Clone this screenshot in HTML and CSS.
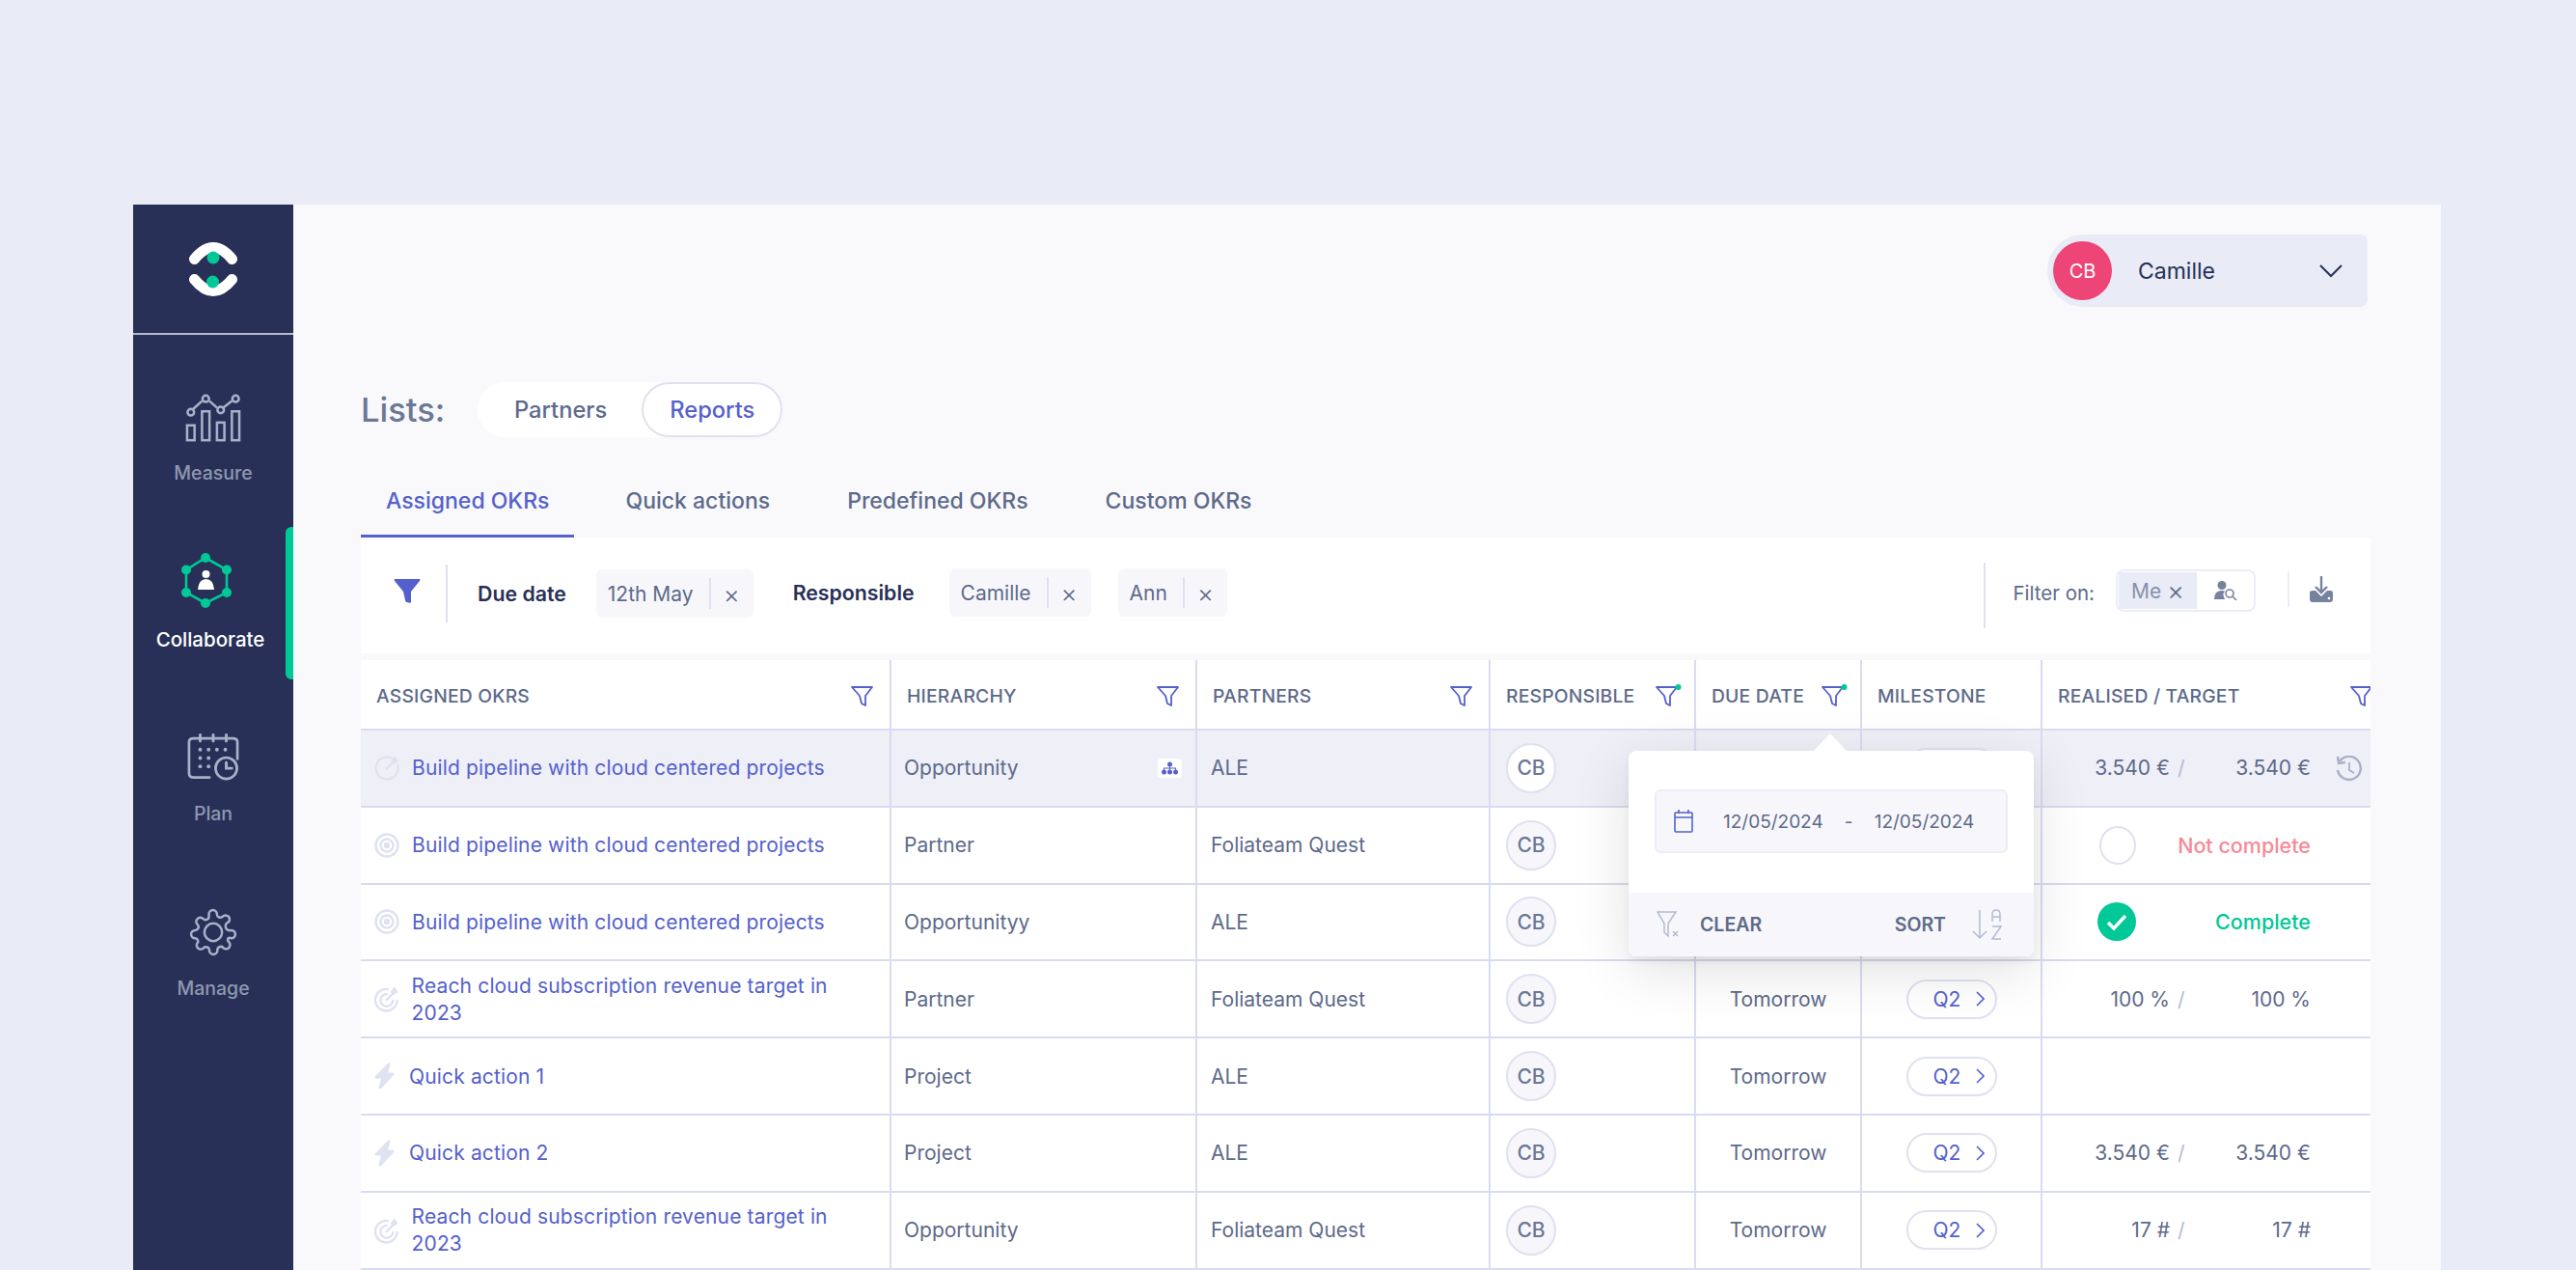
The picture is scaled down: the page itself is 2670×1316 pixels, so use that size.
FILE: index.html
```html
<!DOCTYPE html>
<html lang="en">
<head>
  <meta charset="UTF-8">
  <title>Lists - Assigned OKRs</title>
  <link rel="stylesheet" href="styles.css">
</head>
<body>
  <div class="app">
    <aside class="sidebar">
      <div class="logo">
        <svg width="50" height="56" viewBox="0 0 50 56">
          <path d="M5.500 17.500 Q25 -6.500 44.500 17.500" fill="none" stroke="#fff" stroke-width="11" stroke-linecap="round"/>
          <path d="M5.500 38.500 Q25 62.500 44.500 38.500" fill="none" stroke="#fff" stroke-width="11" stroke-linecap="round"/>
          <circle cx="25" cy="16" r="6.500" fill="#00c896"/>
          <circle cx="24.500" cy="41" r="6.500" fill="#00c896"/>
        </svg>
      </div>
      <nav class="menu">
        <a class="menu-item">
          <svg width="58" height="50" viewBox="0 0 60 50" fill="none" stroke="#a9b1c9" stroke-width="2.6">
            <rect x="2" y="33" width="8" height="16"/>
            <rect x="18" y="18" width="8" height="31"/>
            <rect x="34" y="30" width="8" height="19"/>
            <rect x="50" y="18" width="8" height="31"/>
            <path d="M8 16 L18 7 M26 7 L34 14 M41 14 L50 7"/>
            <circle cx="6" cy="19" r="3.500"/><circle cx="22" cy="4.500" r="3.500"/><circle cx="38" cy="16.500" r="3.500"/><circle cx="54" cy="4.500" r="3.500"/>
          </svg>
          <span>Measure</span>
        </a>
        <a class="menu-item active">
          <svg width="52" height="57" viewBox="0 0 52 57">
            <path d="M25 5 L47 17.500 V41 L25 52 L5 41 V17.500 Z" fill="none" stroke="#00c896" stroke-width="2.600"/>
            <g fill="#00c896">
              <circle cx="25" cy="5" r="5"/><circle cx="47" cy="17.500" r="5"/><circle cx="47" cy="41" r="5"/>
              <circle cx="25" cy="52" r="5"/><circle cx="5" cy="41" r="5"/><circle cx="5" cy="17.500" r="5"/>
            </g>
            <circle cx="25.500" cy="22" r="4" fill="#fff"/>
            <path d="M17 38 Q18 27 25.500 27 Q33 27 34 38 Z" fill="#fff"/>
          </svg>
          <span>Collaborate</span>
        </a>
        <a class="menu-item">
          <svg width="54" height="53" viewBox="0 0 56 52" fill="none" stroke="#a9b1c9" stroke-width="2.800" stroke-linecap="round">
            <path d="M24 48 H7 Q2 48 2 43 V10 Q2 6 7 6 H49 Q54 6 54 10 V28"/>
            <path d="M14 2 V9 M28 2 V9 M42 2 V9" stroke-width="3"/>
            <circle cx="42" cy="38" r="11.500"/>
            <path d="M42 32 V38 H48" stroke-width="3"/>
            <g fill="#a9b1c9" stroke="none">
              <circle cx="14" cy="18" r="2"/><circle cx="23" cy="18" r="2"/><circle cx="32" cy="18" r="2"/><circle cx="41" cy="18" r="2"/>
              <circle cx="14" cy="27" r="2"/><circle cx="23" cy="27" r="2"/>
              <circle cx="14" cy="36" r="2"/><circle cx="23" cy="36" r="2"/>
            </g>
          </svg>
          <span>Plan</span>
        </a>
        <a class="menu-item gear">
          <svg width="50" height="50" viewBox="0 0 24 24" fill="none" stroke="#a9b1c9" stroke-width="1.200" stroke-linejoin="round">
            <circle cx="12" cy="12" r="4.400"/>
            <path d="M19.400 15a1.650 1.650 0 0 0 .33 1.820l.06.06a2 2 0 1 1-2.830 2.830l-.06-.06a1.650 1.650 0 0 0-2.820 1.170V21a2 2 0 1 1-4 0v-.09a1.650 1.650 0 0 0-2.820-1.110l-.06.06a2 2 0 1 1-2.830-2.830l.06-.06A1.650 1.650 0 0 0 3.090 15H3a2 2 0 1 1 0-4h.09a1.650 1.650 0 0 0 1.110-2.820l-.06-.06a2 2 0 1 1 2.830-2.830l.06.06A1.650 1.650 0 0 0 9.850 4.200V3a2 2 0 1 1 4 0v.09a1.650 1.650 0 0 0 2.820 1.110l.06-.06a2 2 0 1 1 2.830 2.830l-.06.06A1.650 1.650 0 0 0 20.910 11H21a2 2 0 1 1 0 4h-.09a1.650 1.650 0 0 0-1.510 0z"/>
          </svg>
          <span>Manage</span>
        </a>
      </nav>
    </aside>

    <main class="main">
      <div class="topbar">
        <div class="user">
          <span class="user-avatar">CB</span>
          <span class="user-name">Camille</span>
          <svg width="24" height="14" viewBox="0 0 24 14" fill="none" stroke="#283058" stroke-width="2"><path d="M1 1 L12 12 L23 1"/></svg>
        </div>
      </div>

      <div class="lists">
        <span class="lists-title">Lists:</span>
        <div class="pill-switch">
          <span class="switch-item">Partners</span>
          <span class="switch-item selected">Reports</span>
        </div>
      </div>

      <div class="tabs">
        <span class="tab selected">Assigned OKRs</span>
        <span class="tab">Quick actions</span>
        <span class="tab">Predefined OKRs</span>
        <span class="tab">Custom OKRs</span>
      </div>

      <div class="filters">
        <svg class="filter-main" width="28" height="25" viewBox="0 0 28 25"><path d="M1 0 H27 Q28 0 27 2 L18 13 V24 Q18 25 16 24.500 Q12 24 12 22 L10 13 L1 2 Q0 0 1 0 Z" fill="#5461cc"/></svg>
        <div class="filter-group">
          <b>Due date</b>
          <span class="chip"><span>12th May</span><i></i><em>×</em></span>
        </div>
        <div class="filter-group second">
          <b>Responsible</b>
          <span class="chip"><span>Camille</span><i></i><em>×</em></span>
          <span class="chip"><span>Ann</span><i></i><em>×</em></span>
        </div>
        <div class="filter-right">
          <span class="filter-label">Filter on:</span>
          <div class="me-box">
            <span class="me-on"><span>Me</span><em>×</em></span>
            <svg width="24" height="20" viewBox="0 0 24 20"><circle cx="8" cy="4.500" r="4.500" fill="#76829e"/><path d="M0 19 Q0 10 8 10 Q10 10 11 10.500 A6 6 0 0 0 11.500 19 Z" fill="#76829e"/><circle cx="16" cy="13" r="4" fill="none" stroke="#76829e" stroke-width="1.600"/><path d="M19 16 L23 20" stroke="#76829e" stroke-width="1.600"/></svg>
          </div>
          <span class="filter-sep"></span>
          <svg class="download" width="26" height="28" viewBox="0 0 26 28"><path d="M13 0 V17 M7 11 L13 17 L19 11" fill="none" stroke="#76829e" stroke-width="2.400"/><path d="M1 17 Q1 15 4 15 H7 L13 21 L19 15 H22 Q25 15 25 17 V24 Q25 27 22 27 H4 Q1 27 1 24 Z" fill="#76829e"/><circle cx="21" cy="23" r="1.300" fill="#fff"/></svg>
        </div>
      </div>

      <div class="table-wrap">
        <div class="okr-table" id="table"></div>

        <div class="date-popup">
          <div class="popup-body">
            <div class="date-box">
              <svg width="20" height="24" viewBox="0 0 20 24" fill="none" stroke="#5461cc" stroke-width="1.600"><rect x="1" y="3" width="18" height="20" rx="1"/><path d="M1 8 H19 M5 0 V4 M15 0 V4"/></svg>
              <span class="date-first">12/05/2024</span>
              <span class="date-dash">-</span>
              <span>12/05/2024</span>
            </div>
          </div>
          <div class="popup-foot">
            <svg width="24" height="28" viewBox="0 0 24 28" fill="none" stroke="#b4bad2" stroke-width="1.500"><path d="M1 1 H20 L12 13 V26 L8 22 V13 Z"/><path d="M17 21 L22 26 M22 21 L17 26"/></svg>
            <span class="foot-clear">CLEAR</span>
            <span class="foot-sort">SORT</span>
            <svg width="32" height="32" viewBox="0 0 32 32" fill="none" stroke="#b4bad2" stroke-width="1.500"><path d="M8 1 V30 M1 23 L8 30 L15 23"/><path d="M21 13 V5 Q21 1 25 1 Q29 1 29 5 V13 M21 8 H29"/><path d="M21 18 H30 L21 31 H30"/></svg>
          </div>
        </div>
      </div>
    </main>
  </div>
  <script src="table.js"></script>
</body>
</html>
```

FILE: styles.css
```css
* {
  box-sizing: border-box;
}

html, body {
  margin: 0;
  height: 100%;
  overflow: hidden;
}

body {
  background-color: #e9ebf6;
  font-family: 'Inter', 'Noto Sans', sans-serif;
  padding: 212px 140px 0 138px;
  color: #5d6a8a;
}

.app {
  display: flex;
  height: 1104px;
  background-color: #f9f9fc;
}

/* sidebar */
.sidebar {
  width: 166px;
  flex: none;
  background-color: #283058;
}

.logo {
  height: 135px;
  border-bottom: 2px solid #b4b9cc;
  display: flex;
  align-items: center;
  justify-content: center;
}

.menu {
  display: flex;
  flex-direction: column;
}

.menu-item {
  height: 181px;
  display: flex;
  flex-direction: column;
  align-items: center;
  justify-content: flex-end;
  gap: 21px;
  font-size: 19.5px;
  line-height: 23px;
  font-weight: 500;
  color: #8e98b0;
  position: relative;
}

.menu-item:first-child {
  height: 155px;
}

.menu-item.gear {
  gap: 22px;
}

.menu-item.active {
  height: 172px;
  color: #fff;
  font-size: 20.5px;
  padding-right: 6px;
}

.menu-item.active svg {
  margin-right: 8px;
}

.menu-item.active::after {
  content: '';
  position: absolute;
  right: 0;
  top: 44px;
  width: 8px;
  height: 158px;
  background-color: #00c896;
  border-radius: 6px 0 0 6px;
}

/* main area */
.main {
  flex: 1;
  min-width: 0;
  padding: 31px 73px 0 70px;
}

.topbar {
  display: flex;
  justify-content: flex-end;
  padding-right: 3px;
}

.user {
  width: 332px;
  height: 75px;
  background-color: #e9ebf6;
  border-radius: 38px 8px 8px 38px;
  display: flex;
  align-items: center;
  padding: 0 26px 0 6px;
}

.user-avatar {
  width: 61px;
  height: 61px;
  border-radius: 50%;
  background-color: #ec4576;
  color: #fff;
  font-size: 20px;
  display: flex;
  align-items: center;
  justify-content: center;
}

.user-name {
  flex: 1;
  margin-left: 27px;
  font-size: 23px;
  color: #283058;
}

.lists {
  display: flex;
  align-items: center;
  margin-top: 78px;
  width: 100%;
}

.lists-title {
  width: 121px;
  font-size: 34.5px;
  font-weight: 500;
  color: #6b7896;
}

.pill-switch {
  display: flex;
  align-items: center;
  height: 57px;
  background-color: #fff;
  border-radius: 29px;
}

.switch-item {
  font-size: 23.7px;
  font-weight: 500;
  padding: 0 36px 0 38px;
}

.switch-item.selected {
  height: 57px;
  width: 146px;
  padding: 0;
  display: flex;
  align-items: center;
  justify-content: center;
  color: #5461cc;
  border: 2px solid #dfe1f0;
  border-radius: 29px;
}

.tabs {
  display: flex;
  margin-top: 43px;
  height: 61px;
}

.tab {
  font-size: 23px;
  font-weight: 500;
  margin-right: 80px;
  padding-top: 9px;
}

.tab.selected {
  color: #5461cc;
  margin-right: 53px;
  padding: 9px 26px 0;
  border-bottom: 3px solid #5461cc;
}

.filters {
  height: 120px;
  background-color: #fff;
  display: flex;
  align-items: center;
  padding-left: 34px;
}

.filter-main {
  margin-top: -10px;
}

.filter-group {
  display: flex;
  align-items: center;
  margin-left: 26px;
  padding-left: 31px;
  height: 60px;
  margin-top: -4px;
  border-left: 2px solid #dfe1f0;
  font-size: 21.3px;
}

.filter-group.second {
  border-left: 0;
  padding-left: 0;
  margin-left: 41px;
  margin-top: -6px;
}

.filter-group b {
  font-weight: 600;
  color: #283058;
  margin-right: 31px;
}

.filter-group.second b {
  margin-right: 36px;
}

.chip {
  height: 50px;
  background-color: #f7f7fb;
  border-radius: 6px;
  display: flex;
  align-items: center;
  padding: 0 14px 0 12px;
  color: #5d6a8a;
  font-size: 21px;
}

.chip + .chip {
  margin-left: 28px;
}

.chip i {
  width: 2px;
  height: 32px;
  background-color: #dfe1f0;
  margin: 0 13px 0 16px;
}

.chip em {
  font-style: normal;
  font-size: 26px;
  font-weight: 300;
  color: #5d6a8a;
}

.filter-right {
  margin-left: auto;
  display: flex;
  align-items: center;
  height: 68px;
  border-left: 2px solid #dfe1f0;
  padding-left: 28px;
  padding-right: 38px;
}

.filter-label {
  font-size: 20.5px;
  margin-top: -6px;
}

.me-box {
  width: 145px;
  height: 44px;
  margin-left: 22px;
  margin-top: -10px;
  border: 2px solid #eceef7;
  border-radius: 8px;
  display: flex;
  align-items: center;
  gap: 18px;
  padding: 1px;
}

.me-on {
  width: 81px;
  height: 38px;
  background-color: #e9ebf6;
  display: flex;
  align-items: center;
  justify-content: center;
  gap: 6px;
  font-size: 21px;
  color: #8791ab;
}

.me-on em {
  font-style: normal;
  font-size: 27px;
  font-weight: 300;
  color: #5d6a8a;
}

.filter-sep {
  width: 2px;
  height: 37px;
  margin: -13px 0 0 33px;
  background-color: #eceef7;
}

.download {
  margin: -12px 0 0 20px;
}

/* table */
.table-wrap {
  position: relative;
  margin-top: 7px;
}

.okr-table {
  display: grid;
  grid-template-columns: 550px 317px 304px 213px 172px 187px 340px;
  grid-template-rows: 73px;
  grid-auto-rows: 79.8px;
  background-color: #fff;
  font-size: 21px;
}

.okr-table .head {
  font-size: 19.3px;
  font-weight: 500;
  letter-spacing: 0.2px;
  text-transform: uppercase;
  justify-content: space-between;
  padding-left: 16px;
  padding-right: 13px;
  padding-top: 2px;
}

.head.no-icon {
  justify-content: flex-start;
}

.okr-table .head.last {
  overflow: hidden;
  padding-right: 0;
}

.head.last svg {
  margin-right: -6px;
  flex: none;
}

.cell {
  display: flex;
  align-items: center;
  border-right: 2px solid #d9dcf0;
  border-bottom: 2px solid #d9dcf0;
  padding: 0 14px;
  min-width: 0;
}

.cell.last {
  border-right: 0;
}

.row-on {
  background-color: #efeff8;
}

.title {
  color: #5461cc;
  line-height: 28px;
  margin-left: 13px;
  padding-top: 1px;
  letter-spacing: 0.15px;
}

.quick .title {
  margin-left: 14px;
}

.hierarchy {
  justify-content: space-between;
  padding-left: 13px;
}

.avatar {
  width: 52px;
  height: 52px;
  margin-left: 2px;
  border-radius: 50%;
  border: 2px solid #dfe1f0;
  background-color: #f7f7fb;
  display: flex;
  align-items: center;
  justify-content: center;
  font-size: 21px;
  font-weight: 500;
  color: #6b7896;
}

.row-on .avatar {
  background-color: #fff;
}

.due {
  justify-content: center;
}

.milestone {
  justify-content: center;
}

.q-pill {
  width: 94px;
  height: 41px;
  border: 2px solid #dfe1f0;
  border-radius: 21px;
  display: flex;
  align-items: center;
  padding-left: 26px;
  gap: 16px;
  background-color: #fff;
  color: #5461cc;
}

.value {
  position: relative;
  padding-left: 0;
  padding-right: 62px;
}

.value .got {
  width: 132px;
  text-align: right;
  white-space: nowrap;
}

.value .slash {
  color: #b4bad2;
  margin-left: 8px;
}

.value .aim {
  flex: 1;
  text-align: right;
  white-space: nowrap;
}

.status {
  justify-content: space-between;
  padding-left: 59px;
  padding-right: 62px;
  font-weight: 500;
  font-size: 21.5px;
}

.status.bad {
  color: #f58a98;
}

.status.good {
  color: #00c896;
  padding-left: 57px;
}

.ring {
  width: 38px;
  height: 40px;
  border-radius: 50%;
  border: 2px solid #dfe1f0;
}

.history {
  position: absolute;
  right: 8px;
  top: 26px;
}

/* date popup */
.date-popup {
  position: absolute;
  left: 1314px;
  top: 94px;
  width: 420px;
  height: 213px;
  background-color: #fff;
  border-radius: 8px;
  box-shadow: 0 6px 10px rgba(0, 0, 0, 0.05), 0 14px 60px rgba(0, 0, 0, 0.12);
  display: flex;
  flex-direction: column;
}

.date-popup::before {
  content: '';
  position: absolute;
  left: 192px;
  top: -18px;
  border-left: 17px solid transparent;
  border-right: 17px solid transparent;
  border-bottom: 18px solid #fff;
}

.popup-body {
  flex: 1;
  padding: 40px 27px 0;
}

.date-box {
  height: 66px;
  background-color: #f7f7fb;
  border: 2px solid #eceef7;
  border-radius: 6px;
  display: flex;
  align-items: center;
  padding-left: 18px;
  font-size: 19px;
  color: #5d6a8a;
}

.date-first {
  margin-left: 31px;
}

.date-dash {
  width: 53px;
  text-align: center;
}

.popup-foot {
  height: 66px;
  background-color: #f7f7fb;
  border-radius: 0 0 8px 8px;
  display: flex;
  align-items: center;
  padding: 0 32px 0 29px;
  font-size: 19.5px;
  font-weight: 600;
}

.foot-clear {
  margin-left: 21px;
}

.foot-sort {
  margin-left: auto;
  margin-right: 27px;
}
```

FILE: table.js
```js
// table data
const icons = {
  goal: '<svg width="26" height="26" viewBox="0 0 26 26" fill="none" stroke="#dfe1f0" stroke-width="2.200"><path d="M18 2.500 A11.500 11.500 0 1 0 24 9"/><path d="M12 14 L20 6.500" stroke-width="2.400"/><path d="M17 6 L21 0 L25 6 L20 9 Z" fill="#dfe1f0" stroke="none"/></svg>',
  target: '<svg width="26" height="26" viewBox="0 0 26 26" fill="none" stroke="#dfe1f0" stroke-width="2.400"><circle cx="13" cy="13" r="11.500"/><circle cx="13" cy="13" r="6.500"/><circle cx="13" cy="13" r="2" fill="#dfe1f0"/></svg>',
  arrow: '<svg width="26" height="28" viewBox="0 0 26 28" fill="none" stroke="#dfe1f0" stroke-width="2.400"><path d="M15 4 A11.500 11.500 0 1 0 24 15"/><path d="M14 9 A6.500 6.500 0 1 0 19.500 15"/><path d="M12 16 L20 8"/><path d="M17 7 L21 1 L25 7 L20 10 Z" fill="#dfe1f0" stroke="none"/></svg>',
  bolt: '<svg width="22" height="28" viewBox="0 0 22 28"><path d="M15 2 L2 15 H9 L6 26 L19 12 H12 Z" fill="#dfe2f1" stroke="#dfe2f1" stroke-width="3" stroke-linejoin="round"/></svg>'
};

const filterIcon = dot => `<svg width="27" height="24" viewBox="0 0 27 24" fill="none" stroke="#5461cc" stroke-width="1.800" stroke-linejoin="round"><path d="M1 3 H22 L15 12 V22 L11 20 L9 12 Z"/>${dot ? '<circle cx="23.500" cy="3" r="3" fill="#00c896" stroke="none"/>' : ''}</svg>`;

const heads = [
  ['Assigned OKRs', ''], ['Hierarchy', ''], ['Partners', ''],
  ['Responsible', 'dot'], ['Due date', 'dot'], ['Milestone', 'none'], ['Realised / Target', '']
];

const title1 = 'Build pipeline with cloud centered projects';
const title2 = 'Reach cloud subscription revenue target in 2023';

const rows = [
  { icon: 'goal', title: title1, hier: 'Opportunity', partner: 'ALE', val: ['3.540 €', '3.540 €'], on: true },
  { icon: 'target', title: title1, hier: 'Partner', partner: 'Foliateam Quest', status: 'bad' },
  // this row's due date and milestone are fully behind the popup
  { icon: 'target', title: title1, hier: 'Opportunityy', partner: 'ALE', status: 'good', covered: true },
  { icon: 'arrow', title: title2, hier: 'Partner', partner: 'Foliateam Quest', val: ['100 %', '100 %'] },
  { icon: 'bolt', title: 'Quick action 1', hier: 'Project', partner: 'ALE' },
  { icon: 'bolt', title: 'Quick action 2', hier: 'Project', partner: 'ALE', val: ['3.540 €', '3.540 €'] },
  { icon: 'arrow', title: title2, hier: 'Opportunity', partner: 'Foliateam Quest', val: ['17 #', '17 #'] }
];

const table = document.getElementById('table');
let html = '';

heads.forEach((h, i) => {
  const last = i === heads.length - 1 ? ' last' : '';
  const icon = h[1] === 'none' ? '' : filterIcon(h[1] === 'dot');
  html += `<div class="cell head${last}${icon ? '' : ' no-icon'}"><span>${h[0]}</span>${icon}</div>`;
});

function lastCell(row, on) {
  if (row.status === 'bad') {
    return `<div class="cell last status bad"><span class="ring"></span><span>Not complete</span></div>`;
  }
  if (row.status === 'good') {
    return `<div class="cell last status good"><svg width="40" height="40" viewBox="0 0 40 40"><circle cx="20" cy="20" r="20" fill="#00c896"/><path d="M11 21 L17 27 L29 14" fill="none" stroke="#fff" stroke-width="3.400"/></svg><span>Complete</span></div>`;
  }
  if (!row.val) return `<div class="cell last"></div>`;
  const history = row.on ? '<svg class="history" width="28" height="28" viewBox="0 0 28 28" fill="none" stroke="#a9afc4" stroke-width="2.400"><path d="M4 6 A12 12 0 1 1 2 15"/><path d="M2 1 L3 8 L10 7"/><path d="M14 7 V15 L19 18" stroke-width="1.800"/></svg>' : '';
  return `<div class="cell last value${on}"><span class="got">${row.val[0]}</span><span class="slash">/</span><span class="aim">${row.val[1]}</span>${history}</div>`;
}

rows.forEach(row => {
  const on = row.on ? ' row-on' : '';
  const hierIcon = row.on ? '<svg width="25" height="20" viewBox="0 0 25 20"><rect width="25" height="20" rx="4" fill="#fff"/><g fill="#5461cc"><circle cx="12.500" cy="6" r="2.500"/><circle cx="6.500" cy="14" r="2.500"/><circle cx="12.500" cy="14" r="2.500"/><circle cx="18.500" cy="14" r="2.500"/><path d="M12 7 H13 V9.500 H19 V12 H18 V10.500 H13 V12 H12 V10.500 H7 V12 H6 V9.500 H12 Z"/></g></svg>' : '';
  html += `<div class="cell${on}${row.icon === 'bolt' ? ' quick' : ''}">${icons[row.icon]}<span class="title">${row.title}</span></div>`;
  html += `<div class="cell hierarchy${on}"><span>${row.hier}</span>${hierIcon}</div>`;
  html += `<div class="cell${on}"><span>${row.partner}</span></div>`;
  html += `<div class="cell${on}"><span class="avatar">CB</span></div>`;
  if (row.covered) {
    html += '<div class="cell"></div><div class="cell"></div>';
  } else {
    html += `<div class="cell due${on}"><span>Tomorrow</span></div>`;
    html += `<div class="cell milestone${on}"><span class="q-pill">Q2<svg width="9" height="16" viewBox="0 0 9 16" fill="none" stroke="#5461cc" stroke-width="1.600"><path d="M1 1 L8 8 L1 15"/></svg></span></div>`;
  }
  html += lastCell(row, on);
});

table.innerHTML = html;
```
